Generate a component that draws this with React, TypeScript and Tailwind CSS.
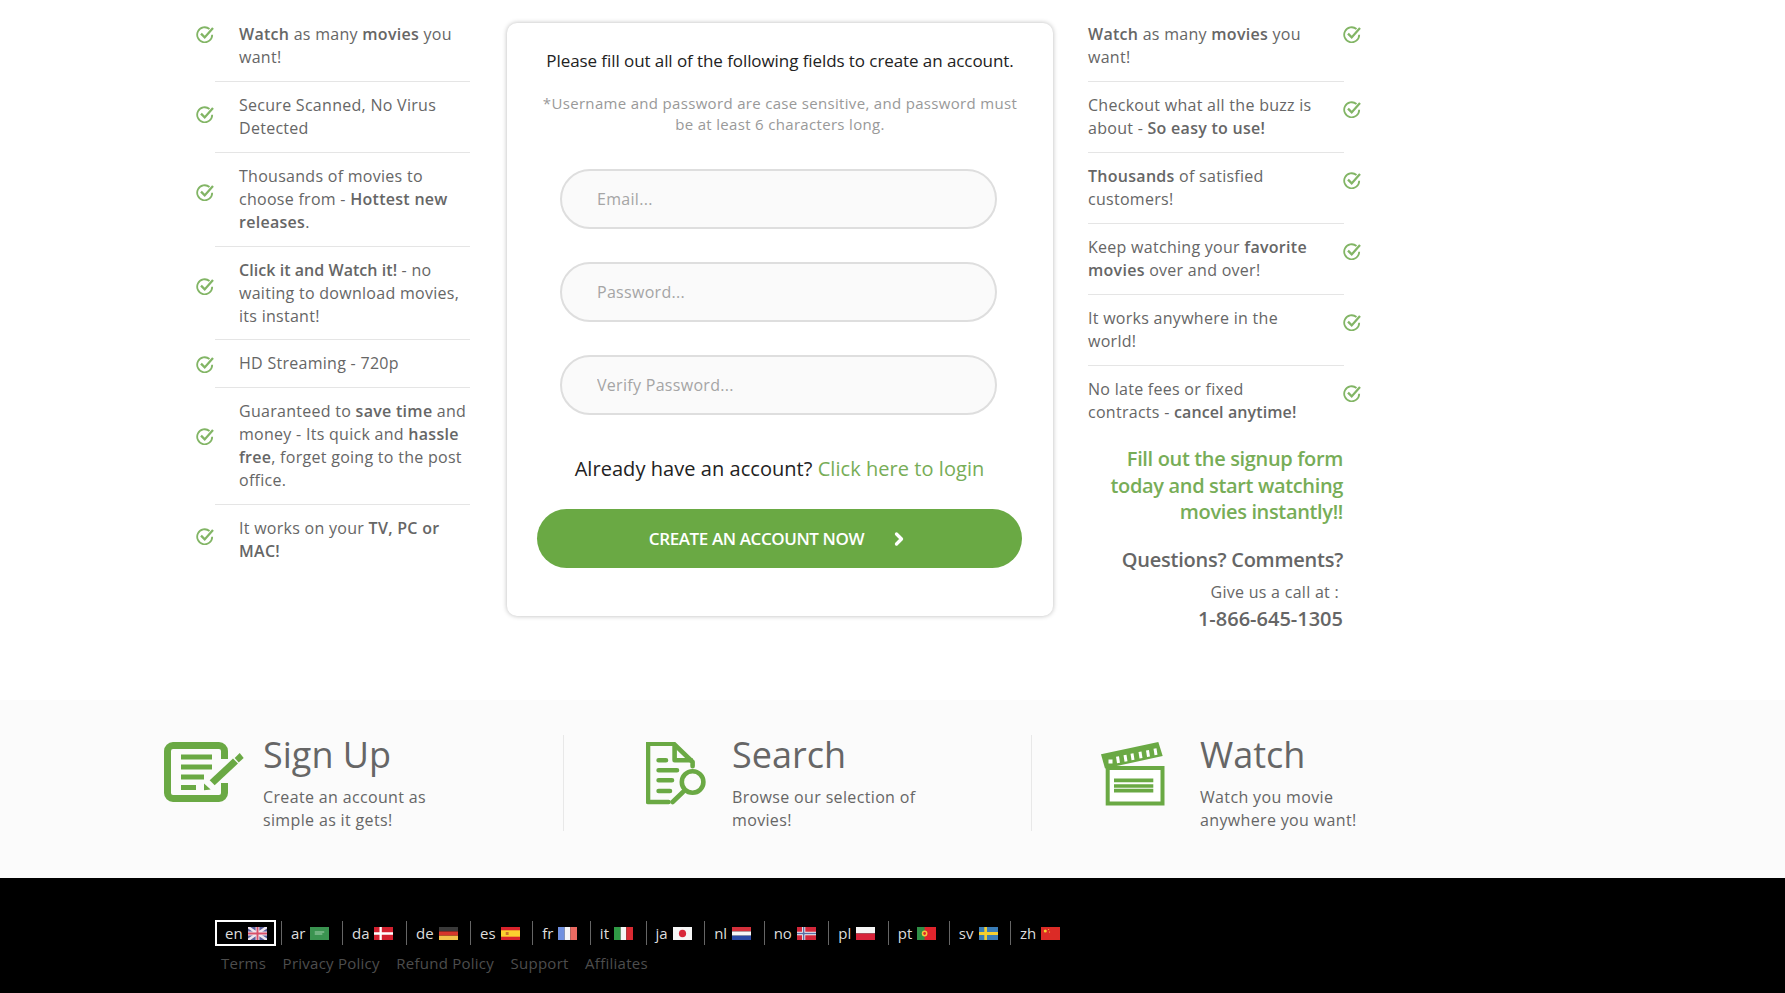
import { ReactNode } from "react";
import { ChevronRight } from "lucide-react";

const leftRows: { body: ReactNode; lift: string; cell?: string }[] = [
  { lift: "mb-[26px]", body: <><b className="font-semibold">Watch</b> as many <b className="font-semibold">movies</b> you want!</> },
  { lift: "mb-[8px]", body: <>Secure Scanned, No Virus Detected</> },
  { lift: "mb-[16px]", body: <>Thousands of movies to choose from - <b className="font-semibold">Hottest new releases</b>.</> },
  { lift: "mb-[16px]", cell: "pb-[11px]", body: <><b className="font-semibold tracking-[0.05px]">Click it and Watch it!</b> - no waiting to download movies, its instant!</> },
  { lift: "mb-0", body: <>HD Streaming - 720p</> },
  { lift: "mb-[22px]", body: <>Guaranteed to <b className="font-semibold">save time</b> and money - Its quick and <b className="font-semibold">hassle free</b>, forget going to the post office.</> },
  { lift: "mb-[8px]", body: <>It works on your <b className="font-semibold">TV, PC or MAC!</b></> },
];

const rightRows: { body: ReactNode; lift: string }[] = [
  { lift: "mb-[26px]", body: <><b className="font-semibold">Watch</b> as many <b className="font-semibold">movies</b> you want!</> },
  { lift: "mb-[17px]", body: <>Checkout what all the buzz is about - <b className="font-semibold">So easy to use!</b></> },
  { lift: "mb-[17px]", body: <><b className="font-semibold">Thousands</b> of satisfied customers!</> },
  { lift: "mb-[17px]", body: <>Keep watching your <b className="font-semibold">favorite movies</b> over and over!</> },
  { lift: "mb-[17px]", body: <>It works anywhere in the world!</> },
  { lift: "mb-[17px]", body: <>No late fees or fixed contracts - <b className="font-semibold tracking-[0.1px]">cancel anytime!</b></> },
];

const langs = ["ar", "da", "de", "es", "fr", "it", "ja", "nl", "no", "pl", "pt", "sv", "zh"];
const links = ["Terms", "Privacy Policy", "Refund Policy", "Support", "Affiliates"];

function Check({ className }: { className: string }) {
  return (
    <svg width="18" height="18" viewBox="0 0 18 18" fill="none" className={`shrink-0 ${className}`}>
      <path d="M13.5 4A7.5 7.5 0 1 0 16.2 9.7" stroke="#82b565" strokeWidth="1.8" />
      <path d="M5 8.6L8.7 12.4L17 3" stroke="#82b565" strokeWidth="2.3" />
    </svg>
  );
}

function Flag({ code }: { code: string }) {
  let body: ReactNode = null;
  switch (code) {
    case "en":
      body = (
        <>
          <rect width="20" height="13" fill="#5a5f9c" />
          <path d="M0 0L20 13M20 0L0 13" stroke="#f0e6ee" strokeWidth="2.6" />
          <path d="M10 0V13M0 6.5H20" stroke="#f0e6ee" strokeWidth="4" />
          <path d="M10 0V13M0 6.5H20" stroke="#d8506a" strokeWidth="2" />
        </>
      );
      break;
    case "ar":
      body = (
        <>
          <rect width="20" height="13" fill="#3a9350" />
          <path d="M5 5H15M5 7H13" stroke="#a9d4b2" strokeWidth="1" />
        </>
      );
      break;
    case "da":
      body = (
        <>
          <rect width="20" height="13" fill="#d3202f" />
          <path d="M7 0V13M0 6.5H20" stroke="#fff" strokeWidth="2.4" />
        </>
      );
      break;
    case "de":
      body = (
        <>
          <rect width="20" height="4.4" fill="#3a3a3a" />
          <rect y="4.4" width="20" height="4.3" fill="#d6362b" />
          <rect y="8.7" width="20" height="4.3" fill="#f2c24a" />
        </>
      );
      break;
    case "es":
      body = (
        <>
          <rect width="20" height="13" fill="#d9232b" />
          <rect y="3.3" width="20" height="6.4" fill="#fbd22f" />
          <rect x="5" y="5" width="3" height="3" fill="#c9762a" />
        </>
      );
      break;
    case "fr":
      body = (
        <>
          <rect width="7" height="13" fill="#6f8fe0" />
          <rect x="7" width="6" height="13" fill="#f4f4f8" />
          <rect x="13" width="7" height="13" fill="#ec6a62" />
        </>
      );
      break;
    case "it":
      body = (
        <>
          <rect width="7" height="13" fill="#2f9a45" />
          <rect x="7" width="6" height="13" fill="#f6f6f6" />
          <rect x="13" width="7" height="13" fill="#da2a32" />
        </>
      );
      break;
    case "ja":
      body = (
        <>
          <rect width="20" height="13" fill="#f6f6f6" />
          <circle cx="10" cy="6.5" r="3.8" fill="#d8283a" />
        </>
      );
      break;
    case "nl":
      body = (
        <>
          <rect width="20" height="4.4" fill="#d5303b" />
          <rect y="4.4" width="20" height="4.3" fill="#f6f6f6" />
          <rect y="8.7" width="20" height="4.3" fill="#2a4aa5" />
        </>
      );
      break;
    case "no":
      body = (
        <>
          <rect width="20" height="13" fill="#d3273a" />
          <path d="M7 0V13M0 6.5H20" stroke="#f3f3f3" strokeWidth="3.4" />
          <path d="M7 0V13M0 6.5H20" stroke="#5a6fa6" strokeWidth="1.6" />
        </>
      );
      break;
    case "pl":
      body = (
        <>
          <rect width="20" height="6.5" fill="#f6f6f6" />
          <rect y="6.5" width="20" height="6.5" fill="#d8233a" />
        </>
      );
      break;
    case "pt":
      body = (
        <>
          <rect width="20" height="13" fill="#e0242c" />
          <rect width="8" height="13" fill="#2f8f46" />
          <circle cx="8" cy="6.5" r="3" fill="#f1c93c" />
          <circle cx="8" cy="6.5" r="1.4" fill="#e0242c" />
        </>
      );
      break;
    case "sv":
      body = (
        <>
          <rect width="20" height="13" fill="#3a7db8" />
          <path d="M7 0V13M0 6.5H20" stroke="#f5cf2f" strokeWidth="2.8" />
        </>
      );
      break;
    default:
      body = (
        <>
          <rect width="20" height="13" fill="#dc2b26" />
          <circle cx="4.5" cy="4" r="1.6" fill="#f5d02f" />
          <circle cx="8" cy="2.5" r=".6" fill="#f5d02f" />
          <circle cx="9" cy="5" r=".6" fill="#f5d02f" />
        </>
      );
  }
  return (
    <svg width="19" height="13" viewBox="0 0 20 13" preserveAspectRatio="none" className="ml-[5px] shrink-0">
      {body}
    </svg>
  );
}

function SignUpIcon() {
  return (
    <svg width="80" height="60" viewBox="0 0 80 60" fill="none">
      <path
        d="M60.5 17V9C60.5 6 58 3.5 55 3.5H9C6 3.5 3.5 6 3.5 9V51C3.5 54 6 56.5 9 56.5H55C58 56.5 60.5 54 60.5 51V41"
        stroke="#6aa944"
        strokeWidth="7"
      />
      <path d="M17 15H48M17 25H48M17 35H40M17 45.5H32" stroke="#6aa944" strokeWidth="5.2" />
      <path d="M45.7 38.3L50.7 43.3L74 21.6L69 16.6Z" fill="#6aa944" />
      <path d="M40 41.6V48.3L46.7 47.6Z" fill="#6aa944" />
      <path d="M75.7 11L70.7 16L74.7 20.6L79.7 16Z" fill="#6aa944" />
    </svg>
  );
}

function SearchIcon() {
  return (
    <svg width="60" height="64" viewBox="0 0 60 64" fill="none">
      <path d="M22.6 60H2V1.6H27.6L46.6 20V24.3" stroke="#6aa944" strokeWidth="4.6" strokeLinejoin="round" strokeLinecap="round" />
      <path d="M28.6 2.3V18.3H46.6" stroke="#6aa944" strokeWidth="4.6" strokeLinejoin="round" />
      <path d="M12.6 18.3H20M12.6 28.3H31M12.6 38.3H26M12.6 49H24" stroke="#6aa944" strokeWidth="4.6" strokeLinecap="round" />
      <circle cx="46.6" cy="40" r="10.8" stroke="#6aa944" strokeWidth="4.6" />
      <path d="M37 50L26.6 60" stroke="#6aa944" strokeWidth="4.6" strokeLinecap="round" />
    </svg>
  );
}

function WatchIcon() {
  return (
    <svg width="64" height="64" viewBox="0 0 64 64" fill="none">
      <rect x="6.7" y="26" width="54.8" height="35.5" stroke="#6aa944" strokeWidth="4" fill="#fff" />
      <path d="M0 12.3L57.3 0L61.7 14L4 26.6Z" fill="#6aa944" />
      <path d="M16.5 14.5L17.5 21M24 13L25 19.5M31 11.5L32 18M39 9.8L40 16.3M46.5 8.2L47.5 14.7M54 6.5L55 13" stroke="#fff" strokeWidth="3" />
      <rect x="7.5" y="17.5" width="4" height="4" fill="#fff" />
      <path d="M13 38.4H52.3M13 44H52.3M13 48.6H52.3" stroke="#6aa944" strokeWidth="3.6" />
    </svg>
  );
}

const features = [
  { title: "Sign Up", desc: "Create an account as simple as it gets!", icon: <SignUpIcon />, box: "w-[399px]", iconBox: "w-[99px]", text: "w-[190px]" },
  { title: "Search", desc: "Browse our selection of movies!", icon: <SearchIcon />, box: "w-[468px] border-l border-[#e8e8e8] pl-[82px]", iconBox: "w-[86px]", text: "w-[200px]" },
  { title: "Watch", desc: "Watch you movie anywhere you want!", icon: <WatchIcon />, box: "border-l border-[#e8e8e8] pl-[69px]", iconBox: "w-[99px]", text: "w-[180px]" },
];

function Field({ placeholder }: { placeholder: string }) {
  return (
    <input
      placeholder={placeholder}
      className="h-[60px] w-[437px] rounded-full border-2 border-[#dedede] bg-[#fafafa] pl-[35px] text-base tracking-[0.3px] text-[#555] placeholder:text-[#a5a5a5]"
    />
  );
}

export default function App() {
  return (
    <div className="min-h-[993px] bg-white text-base leading-[23px] tracking-[0.28px] text-[#666] font-['Open_Sans',sans-serif]">
      <div className="flex h-[700px] items-start pl-[196px] pt-[11px]">
        <div className="w-[274px]">
          {leftRows.map((row, i) => (
            <div key={i} className="flex items-center">
              <Check className={`mr-px ${row.lift}`} />
              <div className={`w-[255px] py-3 pl-6 ${row.cell ?? ""} ${i < leftRows.length - 1 ? "border-b border-[#e5e5e5]" : ""}`}>{row.body}</div>
            </div>
          ))}
        </div>

        <div className="ml-[37px] mt-[12px] flex h-[593px] w-[546px] shrink-0 flex-col items-center rounded-[10px] bg-white pt-[26px] shadow-[0_0_5px_rgba(0,0,0,0.28)]">
          <p className="text-[17px] tracking-[-0.08px] text-[#222]">Please fill out all of the following fields to create an account.</p>
          <p className="mt-[21px] w-[490px] text-center text-[15px] leading-[21px] tracking-[0.32px] text-[#999]">
            *Username and password are case sensitive, and password must be at least 6 characters long.
          </p>
          <div className="mr-[3px] mt-[34px] flex flex-col gap-[33px]">
            <Field placeholder="Email..." />
            <Field placeholder="Password..." />
            <Field placeholder="Verify Password..." />
          </div>
          <p className="mr-[1px] mt-[39px] text-xl leading-[30px] tracking-[0.05px] text-[#222]">
            Already have an account? <a className="text-[#77ad57]">Click here to login</a>
          </p>
          <button className="mr-[2px] mt-[25px] flex h-[59px] w-[485px] items-center justify-center rounded-full bg-[#6aa944] text-[17px] font-semibold tracking-[-0.4px] text-white">
            CREATE AN ACCOUNT NOW
            <ChevronRight size={20} strokeWidth={4} className="ml-[25px]" />
          </button>
        </div>

        <div className="ml-[35px] w-[275px]">
          {rightRows.map((row, i) => (
            <div key={i} className="flex items-center">
              <div className={`w-[256px] py-3 pr-[26px] ${i < rightRows.length - 1 ? "border-b border-[#e5e5e5]" : ""}`}>{row.body}</div>
              <Check className={`-ml-px ${row.lift}`} />
            </div>
          ))}
          <div className="w-[256px] pr-px text-right">
            <p className="mt-[10px] text-xl font-semibold leading-[26.5px] tracking-[-0.35px] text-[#77ad57]">
              Fill out the signup form today and start watching movies instantly!!
            </p>
            <p className="mt-[21px] text-xl font-semibold leading-[26px] tracking-[-0.25px] text-[#666]">Questions? Comments?</p>
            <p className="mt-[8px] pr-1">Give us a call at :</p>
            <p className="mt-[2px] text-xl font-semibold leading-[26px] tracking-normal text-[#666]">1-866-645-1305</p>
          </div>
        </div>
      </div>

      <div className="flex h-[178px] bg-[#fbfbfb] pl-[164px] pt-[35px] tracking-[0.35px]">
        {features.map((f) => (
          <div key={f.title} className={`flex h-[96px] ${f.box}`}>
            <div className={`shrink-0 pt-[7px] ${f.iconBox}`}>{f.icon}</div>
            <div className={f.text}>
              <h3 className="text-4xl leading-[40px] tracking-normal text-[#666]">{f.title}</h3>
              <p className="mt-[11px]">{f.desc}</p>
            </div>
          </div>
        ))}
      </div>

      <div className="h-[115px] bg-black pl-[215px] pt-[42px]">
        <div className="flex items-center text-[15px] leading-[22px] tracking-normal text-[#ddd]">
          <div className="mr-[5px] flex h-[26px] w-[61px] items-center border-2 border-white pl-2">
            en
            <Flag code="en" />
          </div>
          {langs.map((l) => (
            <div key={l} className="flex h-6 items-center border-l border-[#666] pl-[9px] pr-[12.5px]">
              {l}
              <Flag code={l} />
            </div>
          ))}
        </div>
        <div className="mt-[5px] flex gap-[16.5px] pl-[6px] text-[15px] leading-[24px] tracking-[0.25px] text-[#4d4d4d]">
          {links.map((l) => (
            <a key={l}>{l}</a>
          ))}
        </div>
      </div>
    </div>
  );
}
